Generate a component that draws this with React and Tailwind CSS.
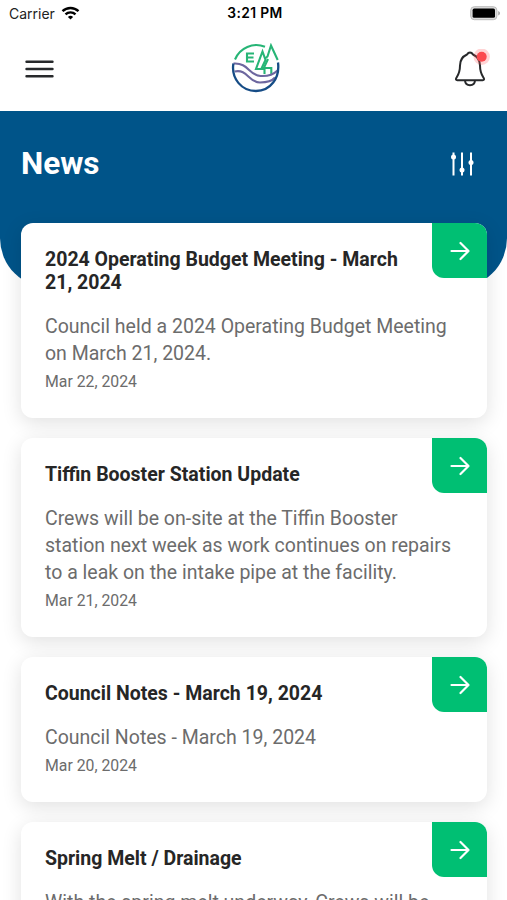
import React from "react";

const newsItems = [
  {
    title: "2024 Operating Budget Meeting - March 21, 2024",
    body: "Council held a 2024 Operating Budget Meeting on March 21, 2024.",
    date: "Mar 22, 2024",
  },
  {
    title: "Tiffin Booster Station Update",
    body: "Crews will be on-site at the Tiffin Booster station next week as work continues on repairs to a leak on the intake pipe at the facility.",
    date: "Mar 21, 2024",
  },
  {
    title: "Council Notes - March 19, 2024",
    body: "Council Notes - March 19, 2024",
    date: "Mar 20, 2024",
  },
  {
    title: "Spring Melt / Drainage",
    body: "With the spring melt underway, Crews will be",
  },
];

const StatusBar = () => (
  <div className="grid h-7 grid-cols-3 items-center pr-[6px] pb-[2px] pl-[9px] font-['Inter',sans-serif] text-[14px] text-[#222]">
    <div className="flex items-center gap-[6px]">
      <span>Carrier</span>
      <svg width="19" height="14" viewBox="0 0 18 14" fill="none" stroke="#000" strokeWidth="2.4">
        <path d="M1 5.2a11.6 11.6 0 0 1 16 0" />
        <path d="M4 8.4a7.2 7.2 0 0 1 10 0" />
        <path d="M6.4 10.9a3.8 3.8 0 0 1 5.2 0L9 13.6z" fill="#000" stroke="none" />
      </svg>
    </div>
    <span className="text-center text-[13.8px] font-semibold tracking-[0.4px] whitespace-nowrap text-black">
      3:21 PM
    </span>
    <svg className="justify-self-end" width="31" height="15" viewBox="0 0 31 15">
      <rect x=".7" y=".7" width="26.2" height="13" rx="3.6" fill="#ddd" stroke="#bbb" />
      <rect x="2.6" y="2.6" width="22.4" height="9.2" rx="1.6" fill="#000" />
      <path d="M28.2 5c2.4.8 2.4 3.7 0 4.5z" fill="#aaa" />
    </svg>
  </div>
);

const Logo = () => (
  <svg className="-mt-[2px]" width="50" height="50" viewBox="0 0 50 50" fill="none" strokeWidth="2.1">
    {/* sky arc, initial and the two trees */}
    <g stroke="#27b576">
      <path d="M4 16.5A23 23 0 0 1 34 3.8" />
      <path d="M23 10.500h-7v8h7M16 14.500h6.500" />
      <path d="M33.500 31v-5h-8.500L31.500 8.500l3 8.500-4 8.500" />
      <path d="M40.300 31v-6h-7.500l4.200-9M34 15.500l2.500-2L40 2.500l6.700 14.500" />
    </g>
    {/* water */}
    <path d="M2.500 20.500c15-1 15 11.500 27 12.500 8 .5 13.500-2 17-5.500" stroke="#6d679f" />
    <path d="M3.500 28.500c13-3 14 11 25.500 11 7 0 12.500-2 15-5" stroke="#6d679f" />
    <path d="M2.400 20.500C0 35.500 10.500 48 25 48s24-13 22-28.500" stroke="#164c86" strokeWidth="2.3" />
  </svg>
);

const Bell = () => (
  <svg width="38" height="40" viewBox="0 0 38 40" fill="none">
    <path
      d="M17 3.500c-1.500 0-2.200.7-3 2C9.500 7.500 7 11 7 16.500c0 7-1.500 9-3.700 12.500-.8 1.500-.3 2.200 1 2.200h25.400c1.300 0 1.800-.7 1-2.200-2.200-3.500-3.700-5.500-3.700-12.500 0-5.500-2.500-9-7-11-.8-1.300-1.500-2-3-2z"
      stroke="#27292b"
      strokeWidth="2"
      strokeLinejoin="round"
    />
    <path d="M12 31.500c.5 6.300 9.500 6.300 10 0" stroke="#27292b" strokeWidth="2" />
    <circle cx="28.700" cy="7.700" r="8.200" fill="#ff5257" fillOpacity=".25" />
    <circle cx="28.700" cy="7.700" r="5" fill="#fb4a4f" />
  </svg>
);

const Sliders = () => (
  <svg width="26" height="26" viewBox="0 0 26 26" fill="#fff" stroke="#fff" strokeWidth="2">
    <path d="M4.500 1.500v23M13 1.500v23M22 1.500v23" />
    <circle cx="4.500" cy="6" r="2.500" stroke="none" />
    <circle cx="13" cy="19" r="2.500" stroke="none" />
    <circle cx="22" cy="11.500" r="2.500" stroke="none" />
  </svg>
);

const NewsCard = ({ item }) => (
  <article className="relative rounded-[12px] bg-white px-6 pt-[25px] pb-[22px] shadow-[0_5px_20px_rgba(0,0,0,0.12)]">
    <h2 className="mb-[19px] pr-[50px] text-[19.5px] leading-[23px] font-bold text-[#262626]">
      {item.title}
    </h2>
    <p className="pr-1 text-[19.5px] leading-[27px] text-[#6c6c6c]">{item.body}</p>
    {item.date && (
      <p className="pt-px text-[15.8px] leading-[28px] text-[#6c6c6c]">{item.date}</p>
    )}
    <button className="absolute top-0 right-0 flex size-[55px] items-center justify-center rounded-tr-[12px] rounded-bl-[12px] bg-[#00bf73]">
      <svg width="20" height="20" viewBox="0 0 20 20" fill="none" stroke="#fff" strokeWidth="2.2" strokeLinecap="round" strokeLinejoin="round">
        <path d="M1.500 10h17M10.500 2l8 8-8 8" />
      </svg>
    </button>
  </article>
);

const App = () => {
  return (
    <div className="h-[900px] w-[507px] overflow-hidden bg-white font-['Roboto',sans-serif]">
      <StatusBar />

      <header className="flex h-[83px] items-center justify-between pr-[16px] pb-[2px] pl-[25px]">
        <svg className="mr-[4px]" width="29" height="20" viewBox="0 0 29 20" stroke="#27292b" strokeWidth="2.4" strokeLinecap="round">
          <path d="M1.500 2.800h26M1.500 10h26M1.500 17.200h26" />
        </svg>
        <Logo />
        <Bell />
      </header>

      <section className="h-[177px] rounded-b-[50px] bg-[#005489] pr-[32px] pl-[21px]">
        <div className="flex h-[106px] items-center justify-between">
          <h1 className="text-[31.5px] font-bold text-white">News</h1>
          <Sliders />
        </div>
      </section>

      <main className="-mt-[65px] flex flex-col gap-5 pr-[20px] pl-[21px]">
        {newsItems.map((item) => (
          <NewsCard key={item.title} item={item} />
        ))}
      </main>
    </div>
  );
};

export default App;
